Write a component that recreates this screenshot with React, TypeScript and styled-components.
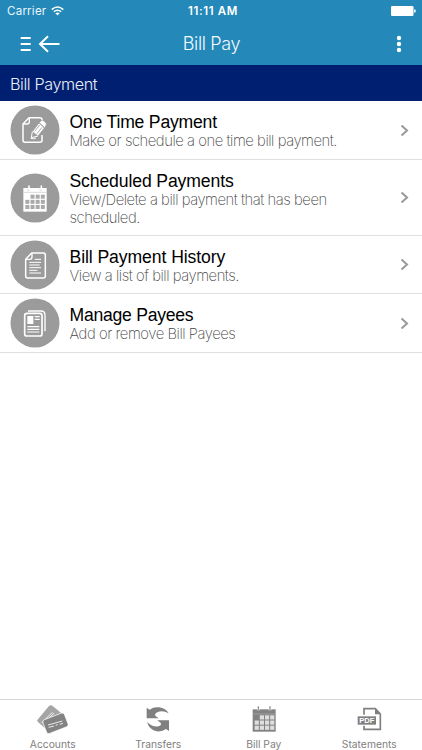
import React from 'react';
import styled, { createGlobalStyle } from 'styled-components';

const GlobalStyle = createGlobalStyle`
  * { box-sizing: border-box; }
  body { margin: 0; background: #fff; }
`;

const Screen = styled.div`
  display: flex;
  flex-direction: column;
  width: 422px;
  height: 750px;
  overflow: hidden;
  background: #fff;
  font-family: 'Liberation Sans', Arial, sans-serif;
`;

const Header = styled.header`
  height: 65px;
  flex: none;
  background: #2488b9;
  color: #fff;
`;

const StatusBar = styled.div`
  display: grid;
  grid-template-columns: 1fr auto 1fr;
  align-items: center;
  height: 22px;
  padding: 0 6px 0 7px;
  font: 400 11.6px/22px Inter, sans-serif;
`;

const Carrier = styled.div`
  display: flex;
  align-items: center;
  gap: 5px;
  letter-spacing: 0.2px;
  color: #eaf6fc;
`;

const Clock = styled.div`
  padding-left: 3px;
  font-weight: 600;
  font-size: 11.5px;
  letter-spacing: 0.65px;
`;

const BatterySlot = styled.div`
  display: flex;
  justify-content: flex-end;
`;

const NavBar = styled.div`
  display: grid;
  grid-template-columns: 1fr auto 1fr;
  align-items: center;
  height: 43px;
  padding: 0 19px 0 20px;
`;

const NavIcons = styled.div<{ $end?: boolean }>`
  display: flex;
  align-items: center;
  justify-content: ${(p) => (p.$end ? 'flex-end' : 'flex-start')};
`;

const Title = styled.h1`
  margin: 0;
  font: 300 18px/43px Inter, sans-serif;
  letter-spacing: -0.35px;
  color: #f2fafe;
`;

const SectionHeader = styled.h2`
  flex: none;
  height: 36px;
  margin: 0;
  padding: 1px 0 0 10px;
  background: #001f70;
  color: #e9edf8;
  font: 300 16.2px/36px Inter, sans-serif;
  letter-spacing: -0.4px;
`;

const Menu = styled.ul`
  flex: 1;
  margin: 0;
  padding: 0;
  list-style: none;
`;

const MenuRow = styled.li<{ $height: number }>`
  display: flex;
  align-items: center;
  height: ${(p) => p.$height}px;
  padding: 0 13px 0 10px;
  border-bottom: 1px solid #e0e0e0;
`;

const RowIcon = styled.svg`
  flex: none;
  width: 50px;
  height: 50px;
`;

const RowText = styled.div`
  flex: 1;
  padding: 2px 0 0 9.5px;
`;

const RowTitle = styled.div<{ $spacing: number }>`
  font-size: 17.6px;
  line-height: 20px;
  letter-spacing: ${(p) => p.$spacing}px;
  color: #000;
`;

const RowDetail = styled.div`
  max-width: 290px;
  font: 200 14.8px/18px Inter, sans-serif;
  letter-spacing: -0.45px;
  color: #444;
`;

const TabBar = styled.nav`
  flex: none;
  display: grid;
  grid-template-columns: repeat(4, 1fr);
  height: 51px;
  border-top: 1px solid #d6d6d6;
`;

const Tab = styled.div`
  display: flex;
  flex-direction: column;
  align-items: center;
  padding-top: 3px;
`;

const TabLabel = styled.span`
  margin-top: 2px;
  font: 400 10.3px/14px Inter, sans-serif;
  letter-spacing: 0;
  color: #808080;
`;

const Wifi = () => (
  <svg width="13" height="10" viewBox="0 0 13 10" fill="none" stroke="#fff" strokeWidth="1.5">
    <path d="M.7 3.6Q6.5-1.6 12.3 3.6M2.8 5.8Q6.5 2.6 10.2 5.8" />
    <path d="M4.4 7.3Q6.5 5.6 8.6 7.3L6.5 9.5Z" fill="#fff" stroke="none" />
  </svg>
);

const Battery = () => (
  <svg width="25" height="10" viewBox="0 0 25 10" fill="#fff">
    <rect width="22.5" height="10" rx="1.3" />
    <path d="M23.2 3.3Q24.9 3.5 24.9 5T23.2 6.7Z" />
  </svg>
);

const MenuAndBack = () => (
  <svg width="41" height="18" viewBox="0 0 41 18" fill="none" stroke="#fff">
    <path d="M.7 3H10.7M.7 9H10.7M.7 15H10.7" strokeWidth="2.1" />
    <path d="M39.5 9H20.5M28 1.3L20 9L28 16.7" strokeWidth="2" />
  </svg>
);

const More = () => (
  <svg width="8" height="18" viewBox="0 0 8 18" fill="#fff">
    <circle cx="4" cy="3" r="2.2" />
    <circle cx="4" cy="9" r="2.2" />
    <circle cx="4" cy="15" r="2.2" />
  </svg>
);

const Chevron = () => (
  <svg width="9" height="13" viewBox="0 0 9 13" fill="none" stroke="#999" strokeWidth="2">
    <path d="M1.5 1.6L7 6.5L1.5 11.4" />
  </svg>
);

const EditPage = () => (
  <g fill="none" stroke="#fff" strokeWidth="4.5" strokeLinejoin="round">
    <path d="M94 49V42Q94 36 88 36H55L37 55V104Q37 110 43 110H88Q94 110 94 104V88" />
    <path d="M38 55H49Q56 55 56 48V37" strokeWidth="4" />
    <path d="M65 78L85 52L101 67L82 91Z" fill="#fff" stroke="#9b9b9b" strokeWidth="2" />
    <path d="M86 51L91 45Q96 42 101 47L106 52Q109 56 105 61L102 66Z" fill="#fff" stroke="#9b9b9b" strokeWidth="2" />
    <path d="M65 78L62 96L82 91M71 78L88 57M77 84L94 63" strokeWidth="3" />
    <path d="M72 77L87 58M79 84L94 65" stroke="#9b9b9b" strokeWidth="2.5" />
    <path d="M60 98Q69 101 76 97" strokeWidth="3" />
  </g>
);

const cells = [
  [1, 0], [2, 0], [3, 0],
  [0, 1], [1, 1], [2, 1], [3, 1],
  [0, 2], [1, 2], [2, 2], [3, 2],
];

const CalendarPage = () => (
  <g>
    <path d="M38 43H108V114H38Z" fill="#fff" />
    <path d="M55 37V48M92 37V48" stroke="#fff" strokeWidth="5" strokeLinecap="round" />
    <path d="M50 47Q51 52 56 51M87 47Q88 52 93 51M38 56H108" fill="none" stroke="#c4c4c4" strokeWidth="2" />
    {cells.map(([c, r]) => (
      <rect key={`${c}-${r}`} x={44 + c * 15.5} y={63 + r * 15.5} width="12" height="12" fill="#aaa" />
    ))}
  </g>
);

const TextPage = () => (
  <g fill="none" stroke="#fff" strokeWidth="4.5" strokeLinejoin="round">
    <path d="M63 37H98Q104 37 104 43V106Q104 112 98 112H51Q45 112 45 106V56Z" />
    <path d="M46 56H57Q64 56 64 49V38" strokeWidth="4" />
    <path d="M72 56H91M56 65H91M56 73H87M56 81H91M56 89H80M56 97H91" strokeWidth="3" />
  </g>
);

const PayeePages = () => (
  <g fill="none" stroke="#fff" strokeWidth="5">
    <path d="M52 37H91Q103 37 103 49V98" strokeWidth="4" />
    <rect x="42" y="44" width="52" height="68" rx="7" />
    <rect x="50" y="52" width="18" height="24" fill="#fff" stroke="none" />
    <path d="M72 54H87M72 62H87M50 84H86M50 92H86M50 100H86" strokeWidth="3.5" />
  </g>
);

const Cards = () => (
  <svg width="34" height="32" viewBox="0 0 102 96">
    <path d="M4 51L39 9Q44 4 50 9L82 35L47 83L39 86L5 56Q3 54 4 51Z" fill="#a5a5a5" />
    <path d="M17 60L49 28M24 63L54 30M31 69L53 42" stroke="#f5f5f5" strokeWidth="3" />
    <rect x="24" y="39" width="69" height="44" rx="7" fill="#838383" stroke="#fff" strokeWidth="2" transform="rotate(-21 58 61)" />
    <path d="M36 66L79 54M38 73L54 69M59 67L65 65M71 64L81 61" stroke="#fff" strokeWidth="2.5" />
  </svg>
);

const Exchange = () => (
  <svg width="34" height="32" viewBox="0 0 102 96" fill="#808080">
    <path d="M17 14L26 20Q38 11 54 13Q75 16 83 31Q64 20 49 28Q40 33 43 38L53 46H17Z" />
    <path d="M84 84L75 78Q63 87 47 85Q26 82 18 57Q37 74 52 70Q63 67 59 60L49 52H84Z" />
  </svg>
);

const TabCalendar = () => (
  <svg width="34" height="32" viewBox="0 0 102 96">
    <path d="M17 19H86V86H17Z" fill="#828282" />
    <path d="M34 11V22M69 11V22" stroke="#fff" strokeWidth="8" />
    <path d="M34 10V22M69 10V22" stroke="#929292" strokeWidth="4" />
    <path d="M17 33H86" stroke="#b0b0b0" strokeWidth="2" />
    {cells.map(([c, r]) => (
      <rect key={`${c}-${r}`} x={23 + c * 15.5} y={37 + r * 15.5} width="12.5" height="12.5" fill="#dedede" />
    ))}
  </svg>
);

const PdfText = styled.text`
  font: 700 20px 'Liberation Sans', Arial, sans-serif;
`;

const PdfPage = () => (
  <svg width="34" height="32" viewBox="0 0 102 96">
    <path d="M36 35V17H70L85 33V79H36V68" fill="none" stroke="#808080" strokeWidth="5" />
    <path d="M69 15V34H86Z" fill="#808080" />
    <rect x="17" y="40" width="55" height="25" fill="#808080" />
    <PdfText x="22" y="59.5" fill="#fff" textLength="45" lengthAdjust="spacingAndGlyphs">PDF</PdfText>
  </svg>
);

const menuItems = [
  { title: 'One Time Payment', detail: 'Make or schedule a one time bill payment.', height: 59, spacing: -0.2, Art: EditPage },
  { title: 'Scheduled Payments', detail: 'View/Delete a bill payment that has been scheduled.', height: 76, spacing: -0.12, Art: CalendarPage },
  { title: 'Bill Payment History', detail: 'View a list of bill payments.', height: 58, spacing: -0.08, Art: TextPage },
  { title: 'Manage Payees', detail: 'Add or remove Bill Payees', height: 59, spacing: -0.25, Art: PayeePages },
];

const tabs = [
  { label: 'Accounts', Icon: Cards },
  { label: 'Transfers', Icon: Exchange },
  { label: 'Bill Pay', Icon: TabCalendar },
  { label: 'Statements', Icon: PdfPage },
];

export default function App() {
  return (
    <Screen>
      <GlobalStyle />
      <Header>
        <StatusBar>
          <Carrier>Carrier <Wifi /></Carrier>
          <Clock>11:11 AM</Clock>
          <BatterySlot><Battery /></BatterySlot>
        </StatusBar>
        <NavBar>
          <NavIcons><MenuAndBack /></NavIcons>
          <Title>Bill Pay</Title>
          <NavIcons $end><More /></NavIcons>
        </NavBar>
      </Header>
      <SectionHeader>Bill Payment</SectionHeader>
      <Menu>
        {menuItems.map(({ title, detail, height, spacing, Art }) => (
          <MenuRow key={title} $height={height}>
            <RowIcon viewBox="-2 -2 150 150">
              <circle cx="73" cy="73" r="73.5" fill="#9b9b9b" />
              <Art />
            </RowIcon>
            <RowText>
              <RowTitle $spacing={spacing}>{title}</RowTitle>
              <RowDetail>{detail}</RowDetail>
            </RowText>
            <Chevron />
          </MenuRow>
        ))}
      </Menu>
      <TabBar>
        {tabs.map(({ label, Icon }) => (
          <Tab key={label}>
            <Icon />
            <TabLabel>{label}</TabLabel>
          </Tab>
        ))}
      </TabBar>
    </Screen>
  );
}
